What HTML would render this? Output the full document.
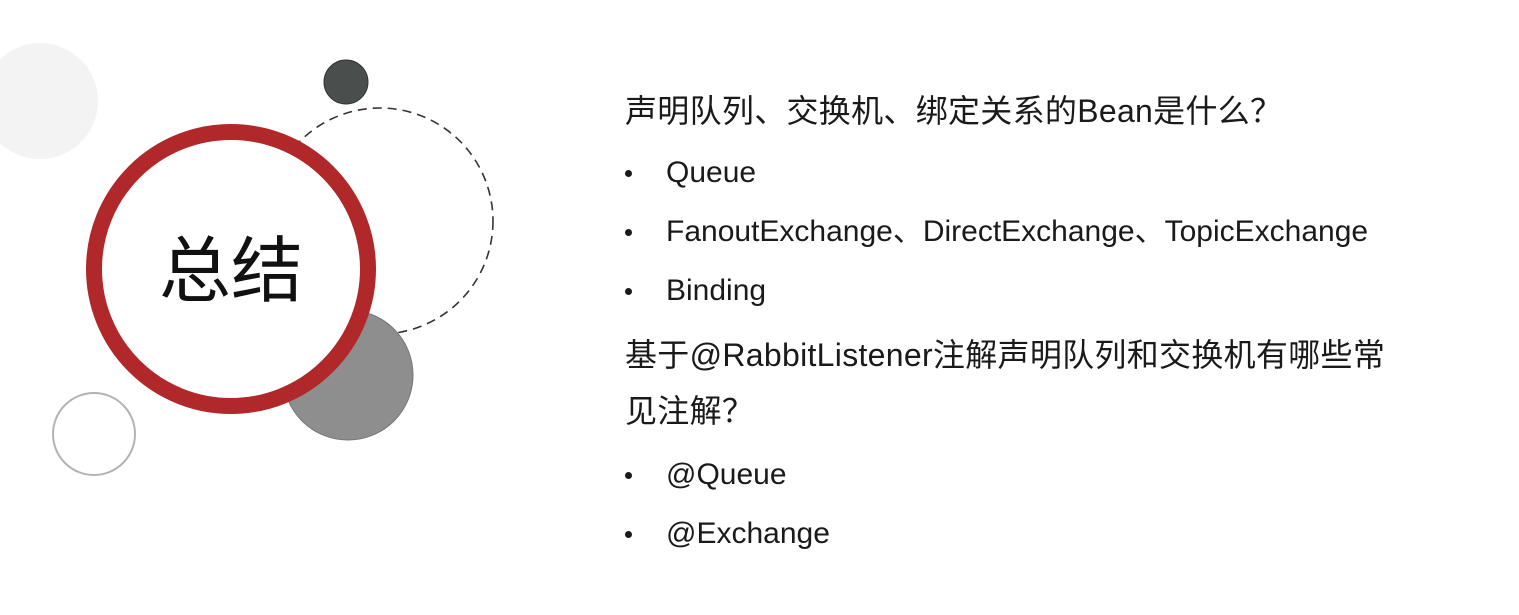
<!DOCTYPE html>
<html><head><meta charset="utf-8"><style>
body{margin:0;width:1519px;height:615px;background:#fff;overflow:hidden;position:relative;font-family:"Liberation Sans","Noto Sans CJK SC",sans-serif;color:#1a1a1a}
.t{position:absolute;left:625px;font-size:32px;white-space:nowrap;line-height:36px;letter-spacing:0.3px}
.b{position:absolute;left:666px;font-size:30px;white-space:nowrap;line-height:36px}
.d{position:absolute;left:625px;width:7px;height:7px;border-radius:50%;background:#1a1a1a}
</style></head><body>
<svg width="620" height="615" style="position:absolute;left:0;top:0">
<circle cx="40" cy="101" r="58" fill="#f3f3f3"/>
<circle cx="346" cy="82" r="22" fill="#4a4f4d" stroke="#333" stroke-width="1"/>
<circle cx="380" cy="221" r="113" fill="none" stroke="#333" stroke-width="1.6" stroke-dasharray="9 6"/>
<circle cx="348" cy="375" r="65" fill="#8e8e8e" stroke="#777" stroke-width="1"/>
<circle cx="231" cy="269" r="137" fill="#fff" stroke="#b0282a" stroke-width="16"/>
<circle cx="94" cy="434" r="41" fill="#fff" stroke="#b3b3b3" stroke-width="2"/>
<text x="231" y="296" text-anchor="middle" font-size="72" font-family="Noto Sans CJK SC, sans-serif" fill="#111">总结</text>
</svg>
<div class="t" style="top:93px">声明队列、交换机、绑定关系的Bean是什么？</div>
<div class="d" style="top:170px"></div><div class="b" style="top:155px">Queue</div>
<div class="d" style="top:229px"></div><div class="b" style="top:214px">FanoutExchange、DirectExchange、TopicExchange</div>
<div class="d" style="top:288px"></div><div class="b" style="top:273px">Binding</div>
<div class="t" style="top:337px">基于@RabbitListener注解声明队列和交换机有哪些常</div>
<div class="t" style="top:393px">见注解？</div>
<div class="d" style="top:472px"></div><div class="b" style="top:457px">@Queue</div>
<div class="d" style="top:531px"></div><div class="b" style="top:516px">@Exchange</div>
</body></html>
